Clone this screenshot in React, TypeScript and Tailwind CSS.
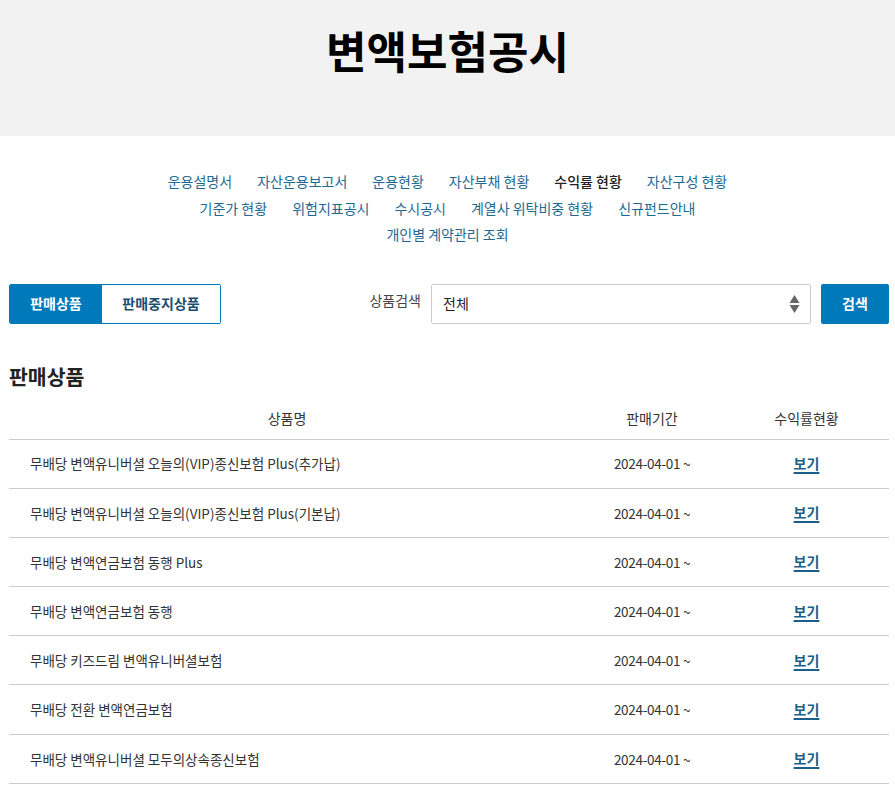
import React from 'react';

const navRows: string[][] = [
  ['운용설명서', '자산운용보고서', '운용현황', '자산부채 현황', '수익률 현황', '자산구성 현황'],
  ['기준가 현황', '위험지표공시', '수시공시', '계열사 위탁비중 현황', '신규펀드안내'],
  ['개인별 계약관리 조회'],
];

const products = [
  '무배당 변액유니버셜 오늘의(VIP)종신보험 Plus(추가납)',
  '무배당 변액유니버셜 오늘의(VIP)종신보험 Plus(기본납)',
  '무배당 변액연금보험 동행 Plus',
  '무배당 변액연금보험 동행',
  '무배당 키즈드림 변액유니버셜보험',
  '무배당 전환 변액연금보험',
  '무배당 변액유니버셜 모두의상속종신보험',
];

const font = { fontFamily: '"Noto Sans CJK KR", "Noto Sans", sans-serif' };

export default function App() {
  const [tab, setTab] = React.useState<'sale' | 'stop'>('sale');

  return (
    <div className="min-h-screen bg-white text-[#333]" style={font}>
      {/* Header */}
      <header className="h-[136px] bg-[#f2f2f2] flex justify-center pt-[20px]">
        <h1 className="text-[44px] font-bold text-black leading-[60px]">변액보험공시</h1>
      </header>

      {/* Sub navigation */}
      <nav className="pt-[32px] flex flex-col items-center">
        {navRows.map((row, i) => (
          <div key={i} className="flex gap-[25px] h-[26.5px] items-center">
            {row.map((item) => (
              <a
                key={item}
                href="#"
                className={`text-[14px] leading-[26px] ${
                  item === '수익률 현황' ? 'text-[#222] font-medium' : 'text-[#1d6a94]'
                }`}
              >
                {item}
              </a>
            ))}
          </div>
        ))}
      </nav>

      {/* Search bar */}
      <div className="mt-[36px] pl-[9px] pr-[6px] flex items-center">
        <div className="flex h-[40px] rounded-[2px] border border-[#0079ba] overflow-hidden">
          <button
            onClick={() => setTab('sale')}
            className={`w-[92px] text-[14px] font-bold ${
              tab === 'sale' ? 'bg-[#0079ba] text-white' : 'bg-white text-[#1a4d6e]'
            }`}
          >
            판매상품
          </button>
          <button
            onClick={() => setTab('stop')}
            className={`w-[118px] text-[14px] font-bold ${
              tab === 'stop' ? 'bg-[#0079ba] text-white' : 'bg-white text-[#1a4d6e]'
            }`}
          >
            판매중지상품
          </button>
        </div>
        <span className="ml-auto text-[14px] text-[#444] mr-[10px] -mt-[6px]">상품검색</span>
        <div className="relative w-[380px] h-[40px] border border-[#ccc] rounded-[2px] flex items-center pl-[11px]">
          <span className="text-[14px] text-[#222]">전체</span>
          <svg className="absolute right-[10px] top-[9px]" width="11" height="20" viewBox="0 0 11 20">
            <path d="M5.5 1 L10.5 9 L0.5 9 Z" fill="#666" />
            <path d="M0.5 11 L10.5 11 L5.5 19 Z" fill="#666" />
          </svg>
        </div>
        <button className="ml-[10px] w-[68px] h-[40px] bg-[#0079ba] rounded-[2px] text-white text-[14px] font-bold">
          검색
        </button>
      </div>

      {/* Product list */}
      <section className="pl-[9px] pr-[6px] mt-[38px]">
        <h2 className="text-[20.5px] font-bold text-[#222] leading-[28px]">판매상품</h2>
        <div className="mt-[14px] grid grid-cols-[556px_174px_1fr] border-b border-[#ccc] h-[36px] items-start text-[14px] text-[#333]">
          <div className="text-center leading-[28px]">상품명</div>
          <div className="text-center leading-[28px]">판매기간</div>
          <div className="text-center leading-[28px] pr-[15px]">수익률현황</div>
        </div>
        {products.map((p) => (
          <div
            key={p}
            className="grid grid-cols-[556px_174px_1fr] border-b border-[#ccc] h-[49.2px] items-center text-[13.5px] text-[#333]"
          >
            <div className="pl-[21px]">{p}</div>
            <div className="text-center tracking-[-0.3px]">2024-04-01 ~</div>
            <div className="text-center pr-[15px]">
              <a href="#" className="font-bold text-[14px] text-[#1a5f8a] underline underline-offset-[3px] decoration-[2px]">
                보기
              </a>
            </div>
          </div>
        ))}
      </section>
    </div>
  );
}
